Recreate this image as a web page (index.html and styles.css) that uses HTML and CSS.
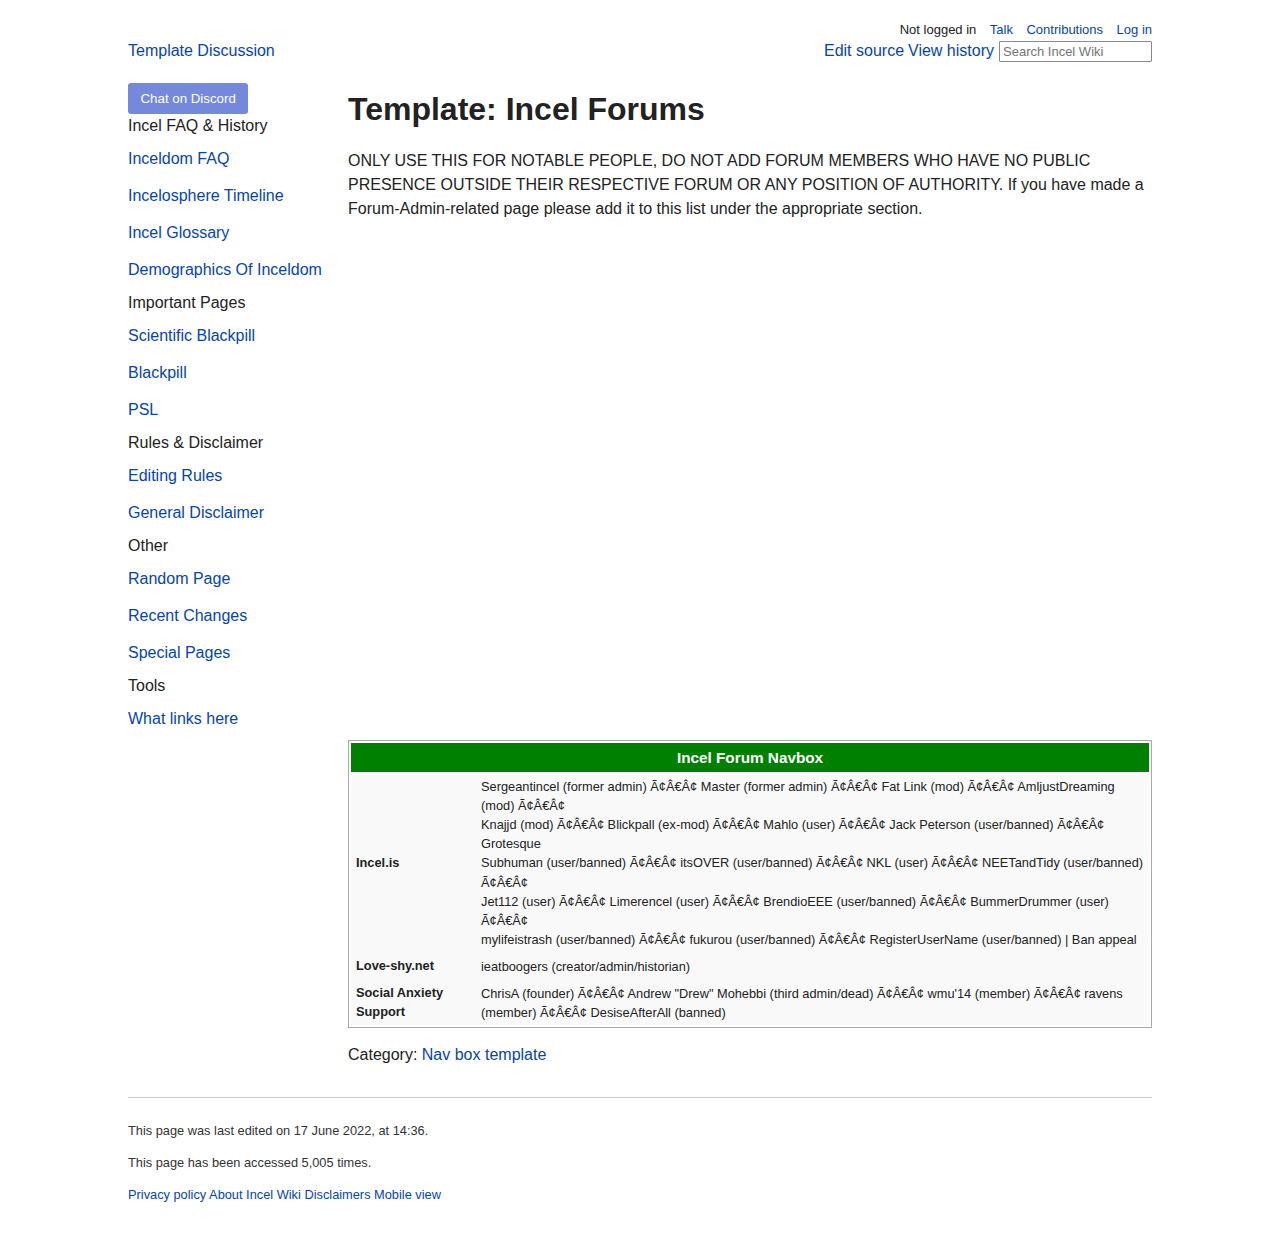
FILE: index.html
```html
<!DOCTYPE html>
<html lang="en">
<head>
<meta charset="utf-8">
<title>Template: Incel Forums</title>
<link rel="stylesheet" href="styles.css">
</head>
<body>
<div class="page">
  <header class="header">
    <div class="personal">
      <span class="muted-dark">Not logged in</span>
      <a href="#">Talk</a>
      <a href="#">Contributions</a>
      <a href="#">Log in</a>
    </div>
    <div class="tabs">
      <a href="#" class="tab">Template Discussion</a>
      <div class="actions">
        <a href="#" class="tab">Edit source</a>
        <a href="#" class="tab">View history</a>
        <input class="search" type="text" placeholder="Search Incel Wiki">
      </div>
    </div>
  </header>

  <div class="body">
    <nav class="sidebar">
      <a href="#" class="discord">Chat on Discord</a>
      <div class="nav-heading">Incel FAQ &amp; History</div>
      <ul class="nav-list">
        <li><a href="#">Inceldom FAQ</a></li>
        <li><a href="#">Incelosphere Timeline</a></li>
        <li><a href="#">Incel Glossary</a></li>
        <li><a href="#">Demographics Of Inceldom</a></li>
      </ul>
      <div class="nav-heading">Important Pages</div>
      <ul class="nav-list">
        <li><a href="#">Scientific Blackpill</a></li>
        <li><a href="#">Blackpill</a></li>
        <li><a href="#">PSL</a></li>
      </ul>
      <div class="nav-heading">Rules &amp; Disclaimer</div>
      <ul class="nav-list">
        <li><a href="#">Editing Rules</a></li>
        <li><a href="#">General Disclaimer</a></li>
      </ul>
      <div class="nav-heading">Other</div>
      <ul class="nav-list">
        <li><a href="#">Random Page</a></li>
        <li><a href="#">Recent Changes</a></li>
        <li><a href="#">Special Pages</a></li>
      </ul>
      <div class="nav-heading">Tools</div>
      <ul class="nav-list">
        <li><a href="#">What links here</a></li>
      </ul>
    </nav>

    <main class="content">
      <h1 class="title">Template: Incel Forums</h1>
      <p class="intro">ONLY USE THIS FOR NOTABLE PEOPLE, DO NOT ADD FORUM MEMBERS WHO HAVE NO PUBLIC PRESENCE OUTSIDE THEIR RESPECTIVE FORUM OR ANY POSITION OF AUTHORITY. If you have made a Forum-Admin-related page please add it to this list under the appropriate section.</p>
      <div class="spacer"></div>

      <div class="navbox">
        <table class="navbox-inner">
          <tr><th colspan="2" class="navbox-title">Incel Forum Navbox</th></tr>
          <tr>
            <th class="navbox-group">Incel.is</th>
            <td class="navbox-list">Sergeantincel (former admin) Ã¢Â€Â¢ Master (former admin) Ã¢Â€Â¢ Fat Link (mod) Ã¢Â€Â¢ AmljustDreaming (mod) Ã¢Â€Â¢<br>Knajjd (mod) Ã¢Â€Â¢ Blickpall (ex-mod) Ã¢Â€Â¢ Mahlo (user) Ã¢Â€Â¢ Jack Peterson (user/banned) Ã¢Â€Â¢ Grotesque<br>Subhuman (user/banned) Ã¢Â€Â¢ itsOVER (user/banned) Ã¢Â€Â¢ NKL (user) Ã¢Â€Â¢ NEETandTidy (user/banned) Ã¢Â€Â¢<br>Jet112 (user) Ã¢Â€Â¢ Limerencel (user) Ã¢Â€Â¢ BrendioEEE (user/banned) Ã¢Â€Â¢ BummerDrummer (user) Ã¢Â€Â¢<br>mylifeistrash (user/banned) Ã¢Â€Â¢ fukurou (user/banned) Ã¢Â€Â¢ RegisterUserName (user/banned) | Ban appeal</td>
          </tr>
          <tr>
            <th class="navbox-group">Love-shy.net</th>
            <td class="navbox-list">ieatboogers (creator/admin/historian)</td>
          </tr>
          <tr>
            <th class="navbox-group">Social Anxiety Support</th>
            <td class="navbox-list">ChrisA (founder) Ã¢Â€Â¢ Andrew "Drew" Mohebbi (third admin/dead) Ã¢Â€Â¢ wmu'14 (member) Ã¢Â€Â¢ ravens (member) Ã¢Â€Â¢ DesiseAfterAll (banned)</td>
          </tr>
        </table>
      </div>

      <div class="catlinks">Category: <a href="#">Nav box template</a></div>
    </main>
  </div>

  <footer class="footer">
    <p>This page was last edited on 17 June 2022, at 14:36.</p>
    <p>This page has been accessed 5,005 times.</p>
    <p class="footer-links"><a href="#">Privacy policy</a> <a href="#">About Incel Wiki</a> <a href="#">Disclaimers</a> <a href="#">Mobile view</a></p>
  </footer>
</div>
</body>
</html>
```

FILE: styles.css
```css
* { box-sizing: border-box; }
html, body { margin: 0; padding: 0; background: #fff; }
body {
  font-family: "Liberation Sans", Arial, Helvetica, sans-serif;
  color: #222;
  font-size: 16px;
}
a { color: #0645ad; text-decoration: none; }

.page {
  width: 1024px;
  margin: 0 auto;
}

.header {
  padding-top: 21px;
}
.personal {
  display: flex;
  justify-content: flex-end;
  gap: 13.5px;
  font-size: 13px;
  line-height: 18px;
}
.muted-dark { color: #222; }

.tabs {
  display: flex;
  justify-content: space-between;
  align-items: center;
  height: 23px;
}
.tab { font-size: 16px; line-height: 21px; }
.actions {
  display: flex;
  align-items: center;
  gap: 4px;
}
.search {
  width: 153px;
  height: 21px;
  margin: 0 0 0 1px;
  padding: 1px 3px;
  border: 1px solid #8a8a8a;
  border-radius: 1px;
  font-family: "Liberation Sans", Arial, sans-serif;
  font-size: 13px;
  color: #222;
  background: #fff;
  position: relative;
  top: 1px;
}
.search::placeholder { color: #757575; }

.body {
  display: flex;
  margin-top: 21px;
}
.sidebar {
  width: 220px;
  flex-shrink: 0;
  display: flex;
  flex-direction: column;
  align-items: flex-start;
}
.discord {
  display: inline-block;
  background: #7589dc;
  color: #fff;
  font-size: 13.3px;
  line-height: 31px;
  height: 31px;
  padding: 0 12.5px;
  border-radius: 3px;
  margin-bottom: 2px;
}
.nav-heading {
  font-size: 16px;
  line-height: 20px;
  color: #222;
}
.nav-list {
  list-style: none;
  margin: 0;
  padding: 13px 0;
  display: flex;
  flex-direction: column;
  gap: 17px;
}
.nav-list li { font-size: 16px; line-height: 20px; }

.content {
  width: 804px;
  padding-top: 6px;
}
.title {
  margin: 0 0 20px;
  font-size: 32px;
  line-height: 40px;
  font-weight: bold;
  color: #222;
}
.intro {
  margin: 0;
  font-size: 16px;
  line-height: 24px;
}
.spacer { height: 519px; }

.navbox {
  border: 1px solid #aaa;
  padding: 2px;
  background: #fff;
}
.navbox-inner {
  width: 100%;
  border-collapse: collapse;
  border-spacing: 0;
  background: #f9f9f9;
  font-size: 12.8px;
}
.navbox-title {
  background: #008000;
  color: #fff;
  font-size: 15.3px;
  font-weight: bold;
  height: 29.4px;
  padding: 0 5px;
  text-align: center;
}
.navbox-group {
  width: 125px;
  text-align: left;
  font-weight: bold;
  padding: 3.6px 5px;
  line-height: 19.2px;
  vertical-align: middle;
}
.navbox-list {
  padding: 4.2px 5px 3.3px;
  line-height: 19.2px;
  color: #222;
}

.catlinks {
  margin-top: 15px;
  font-size: 16px;
  line-height: 24px;
}

.footer {
  margin-top: 30px;
  border-top: 1px solid #ccc;
  padding-top: 11px;
  padding-bottom: 20px;
  font-size: 12.8px;
  color: #333;
}
.footer p {
  margin: 12px 0;
  line-height: 20px;
}
```
